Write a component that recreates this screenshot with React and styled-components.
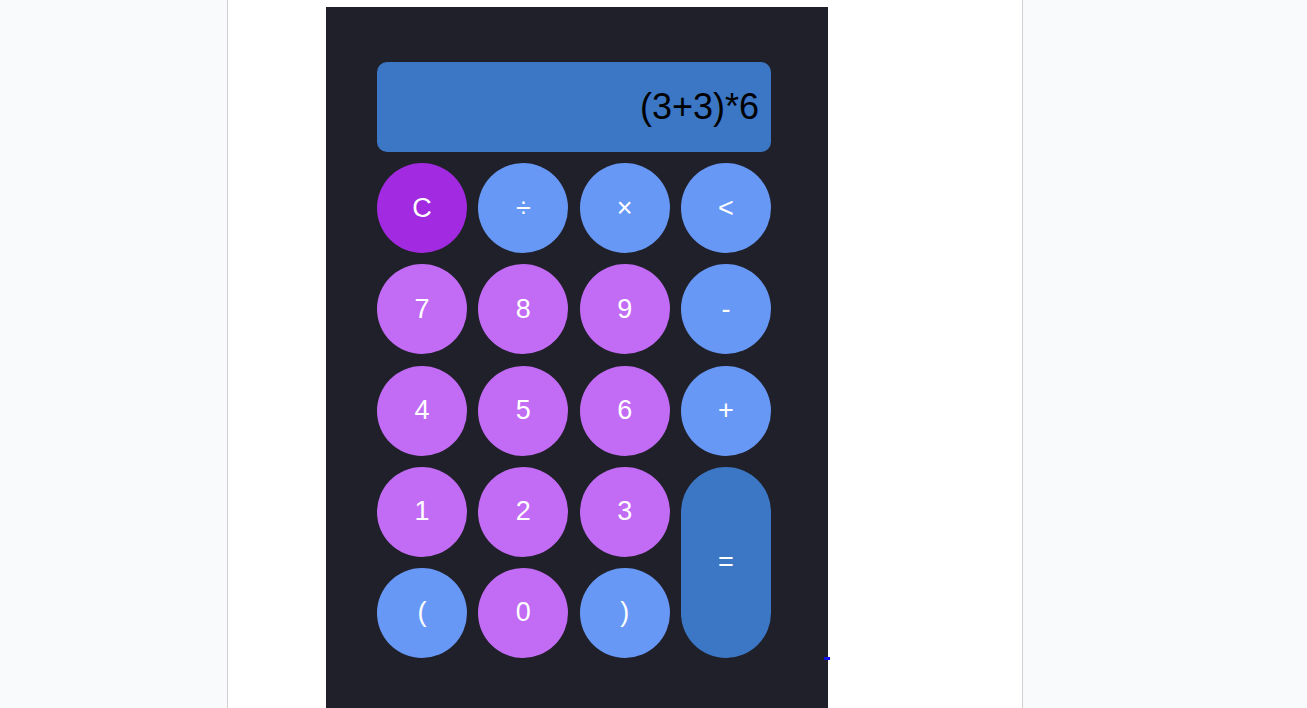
import React from "react";
import styled, { createGlobalStyle } from "styled-components";

const GlobalStyle = createGlobalStyle`
    body {
        margin: 0;
        background-color: #f8fafc;
        font-family: "Liberation Sans", Arial, sans-serif;
    }
`;

const Page = styled.div`
    margin-left: 227px;
    width: 796px;
    min-height: 100vh;
    background-color: #ffffff;
    border-left: 1px solid #cfcfd4;
    border-right: 1px solid #cfcfd4;
    padding: 7px 0 0 98px;
    box-sizing: border-box;
`;

const Calculator = styled.div`
    position: relative;
    width: 502px;
    padding: 55px 57px 55px 51px;
    box-sizing: border-box;
    background-color: #20202a;
`;

const Keypad = styled.div`
    display: grid;
    grid-template-columns: repeat(4, 90px);
    grid-auto-rows: 90px;
    column-gap: 11.33px;
    row-gap: 11.2px;
`;

const Display = styled.div`
    grid-column: 1 / -1;
    display: flex;
    align-items: center;
    justify-content: flex-end;
    padding: 0 12px;
    border-radius: 10px;
    background-color: #3b77c5;
    color: #000000;
    font-size: 36px;
`;

const colors = {
    clear: "#a22ae0",
    number: "#c26bf4",
    operator: "#6898f5",
    equals: "#3b77c5",
};

const Key = styled.button`
    border: none;
    padding: 0;
    border-radius: 45px;
    background-color: ${(p) => colors[p.$kind]};
    color: #ffffff;
    font-family: "Liberation Sans", Arial, sans-serif;
    font-size: 27px;
    cursor: pointer;
    grid-row: ${(p) => (p.$tall ? "span 2" : "auto")};
`;

const Caret = styled.span`
    position: absolute;
    right: -2px;
    top: 650px;
    width: 6px;
    height: 3px;
    background-color: #1010ee;
`;

const keys = [
    ["C", "clear"], ["÷", "operator"], ["×", "operator"], ["<", "operator"],
    ["7", "number"], ["8", "number"], ["9", "number"], ["-", "operator"],
    ["4", "number"], ["5", "number"], ["6", "number"], ["+", "operator"],
    ["1", "number"], ["2", "number"], ["3", "number"], ["=", "equals", true],
    ["(", "operator"], ["0", "number"], [")", "operator"],
];

const App = () => {
    return (
        <>
            <GlobalStyle />
            <Page>
                <Calculator>
                    <Keypad>
                        <Display>(3+3)*6</Display>
                        {keys.map(([label, kind, tall]) => (
                            <Key key={label} $kind={kind} $tall={tall}>
                                {label}
                            </Key>
                        ))}
                    </Keypad>
                    <Caret />
                </Calculator>
            </Page>
        </>
    );
};

export default App;
